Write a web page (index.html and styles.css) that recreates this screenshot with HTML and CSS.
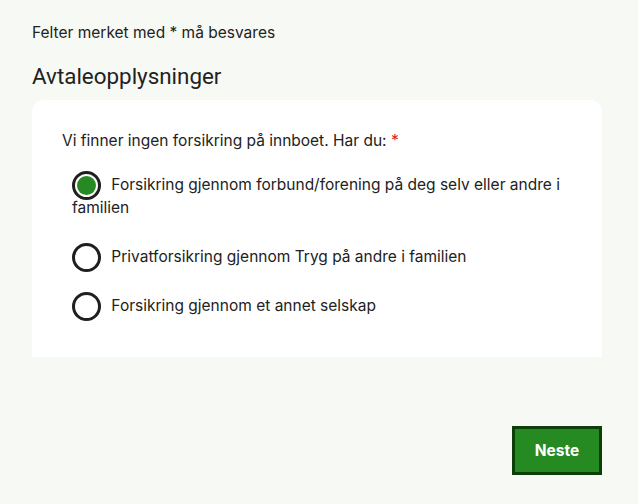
FILE: index.html
```html
<!DOCTYPE html>
<html lang="no">
<head>
<meta charset="utf-8">
<title>Avtaleopplysninger</title>
<link rel="stylesheet" href="styles.css">
</head>
<body>
<main class="page">
  <p class="note">Felter merket med * må besvares</p>
  <h2 class="title">Avtaleopplysninger</h2>
  <section class="card">
    <fieldset class="group">
      <legend class="question">Vi finner ingen forsikring på innboet. Har du: <span class="req">*</span></legend>
      <label class="option"><span class="radio checked"></span> Forsikring gjennom forbund/forening på deg selv eller andre i familien</label>
      <label class="option"><span class="radio"></span> Privatforsikring gjennom Tryg på andre i familien</label>
      <label class="option"><span class="radio"></span> Forsikring gjennom et annet selskap</label>
    </fieldset>
  </section>
  <div class="actions">
    <button class="next" type="button">Neste</button>
  </div>
</main>
</body>
</html>
```
FILE: styles.css
```css
html, body {
  margin: 0;
  padding: 0;
  background: #f7f9f4;
}
body {
  font-family: Inter, "Noto Sans", sans-serif;
  color: #222222;
}
.page {
  width: 570px;
  padding: 23px 32px 0;
}
.note {
  margin: 0;
  font-size: 15.5px;
  line-height: 20px;
}
.title {
  margin: 19px 0 0;
  font-family: Roboto, "Noto Sans", sans-serif;
  font-size: 22.4px;
  font-weight: 400;
  line-height: 28px;
}
.card {
  margin-top: 10px;
  background: #ffffff;
  border-radius: 12px 12px 0 0;
  padding: 30px 30px 14px;
}
.group {
  border: 0;
  margin: 0;
  padding: 0;
}
.question {
  padding: 0;
  font-size: 15.5px;
  line-height: 22px;
  margin-bottom: 21px;
}
.req {
  color: #e0201b;
}
.option {
  display: block;
  margin-left: 10px;
  font-size: 15.5px;
  line-height: 23px;
  margin-bottom: 26px;
}
.radio {
  display: inline-block;
  box-sizing: border-box;
  width: 29px;
  height: 29px;
  border: 3px solid #1f1f1f;
  border-radius: 50%;
  vertical-align: middle;
  margin: -8px 6px -8px 0;
  position: relative;
}
.radio.checked::after {
  content: "";
  position: absolute;
  left: 2px;
  top: 2px;
  width: 19px;
  height: 19px;
  border-radius: 50%;
  background: #268a23;
}
.actions {
  display: flex;
  justify-content: flex-end;
  margin-top: 69px;
}
.next {
  width: 90px;
  height: 49px;
  background: #268a22;
  border: 3px solid #0d3f0a;
  color: #ffffff;
  font-family: Inter, "Noto Sans", sans-serif;
  font-weight: 700;
  font-size: 15.5px;
  cursor: pointer;
}
```
